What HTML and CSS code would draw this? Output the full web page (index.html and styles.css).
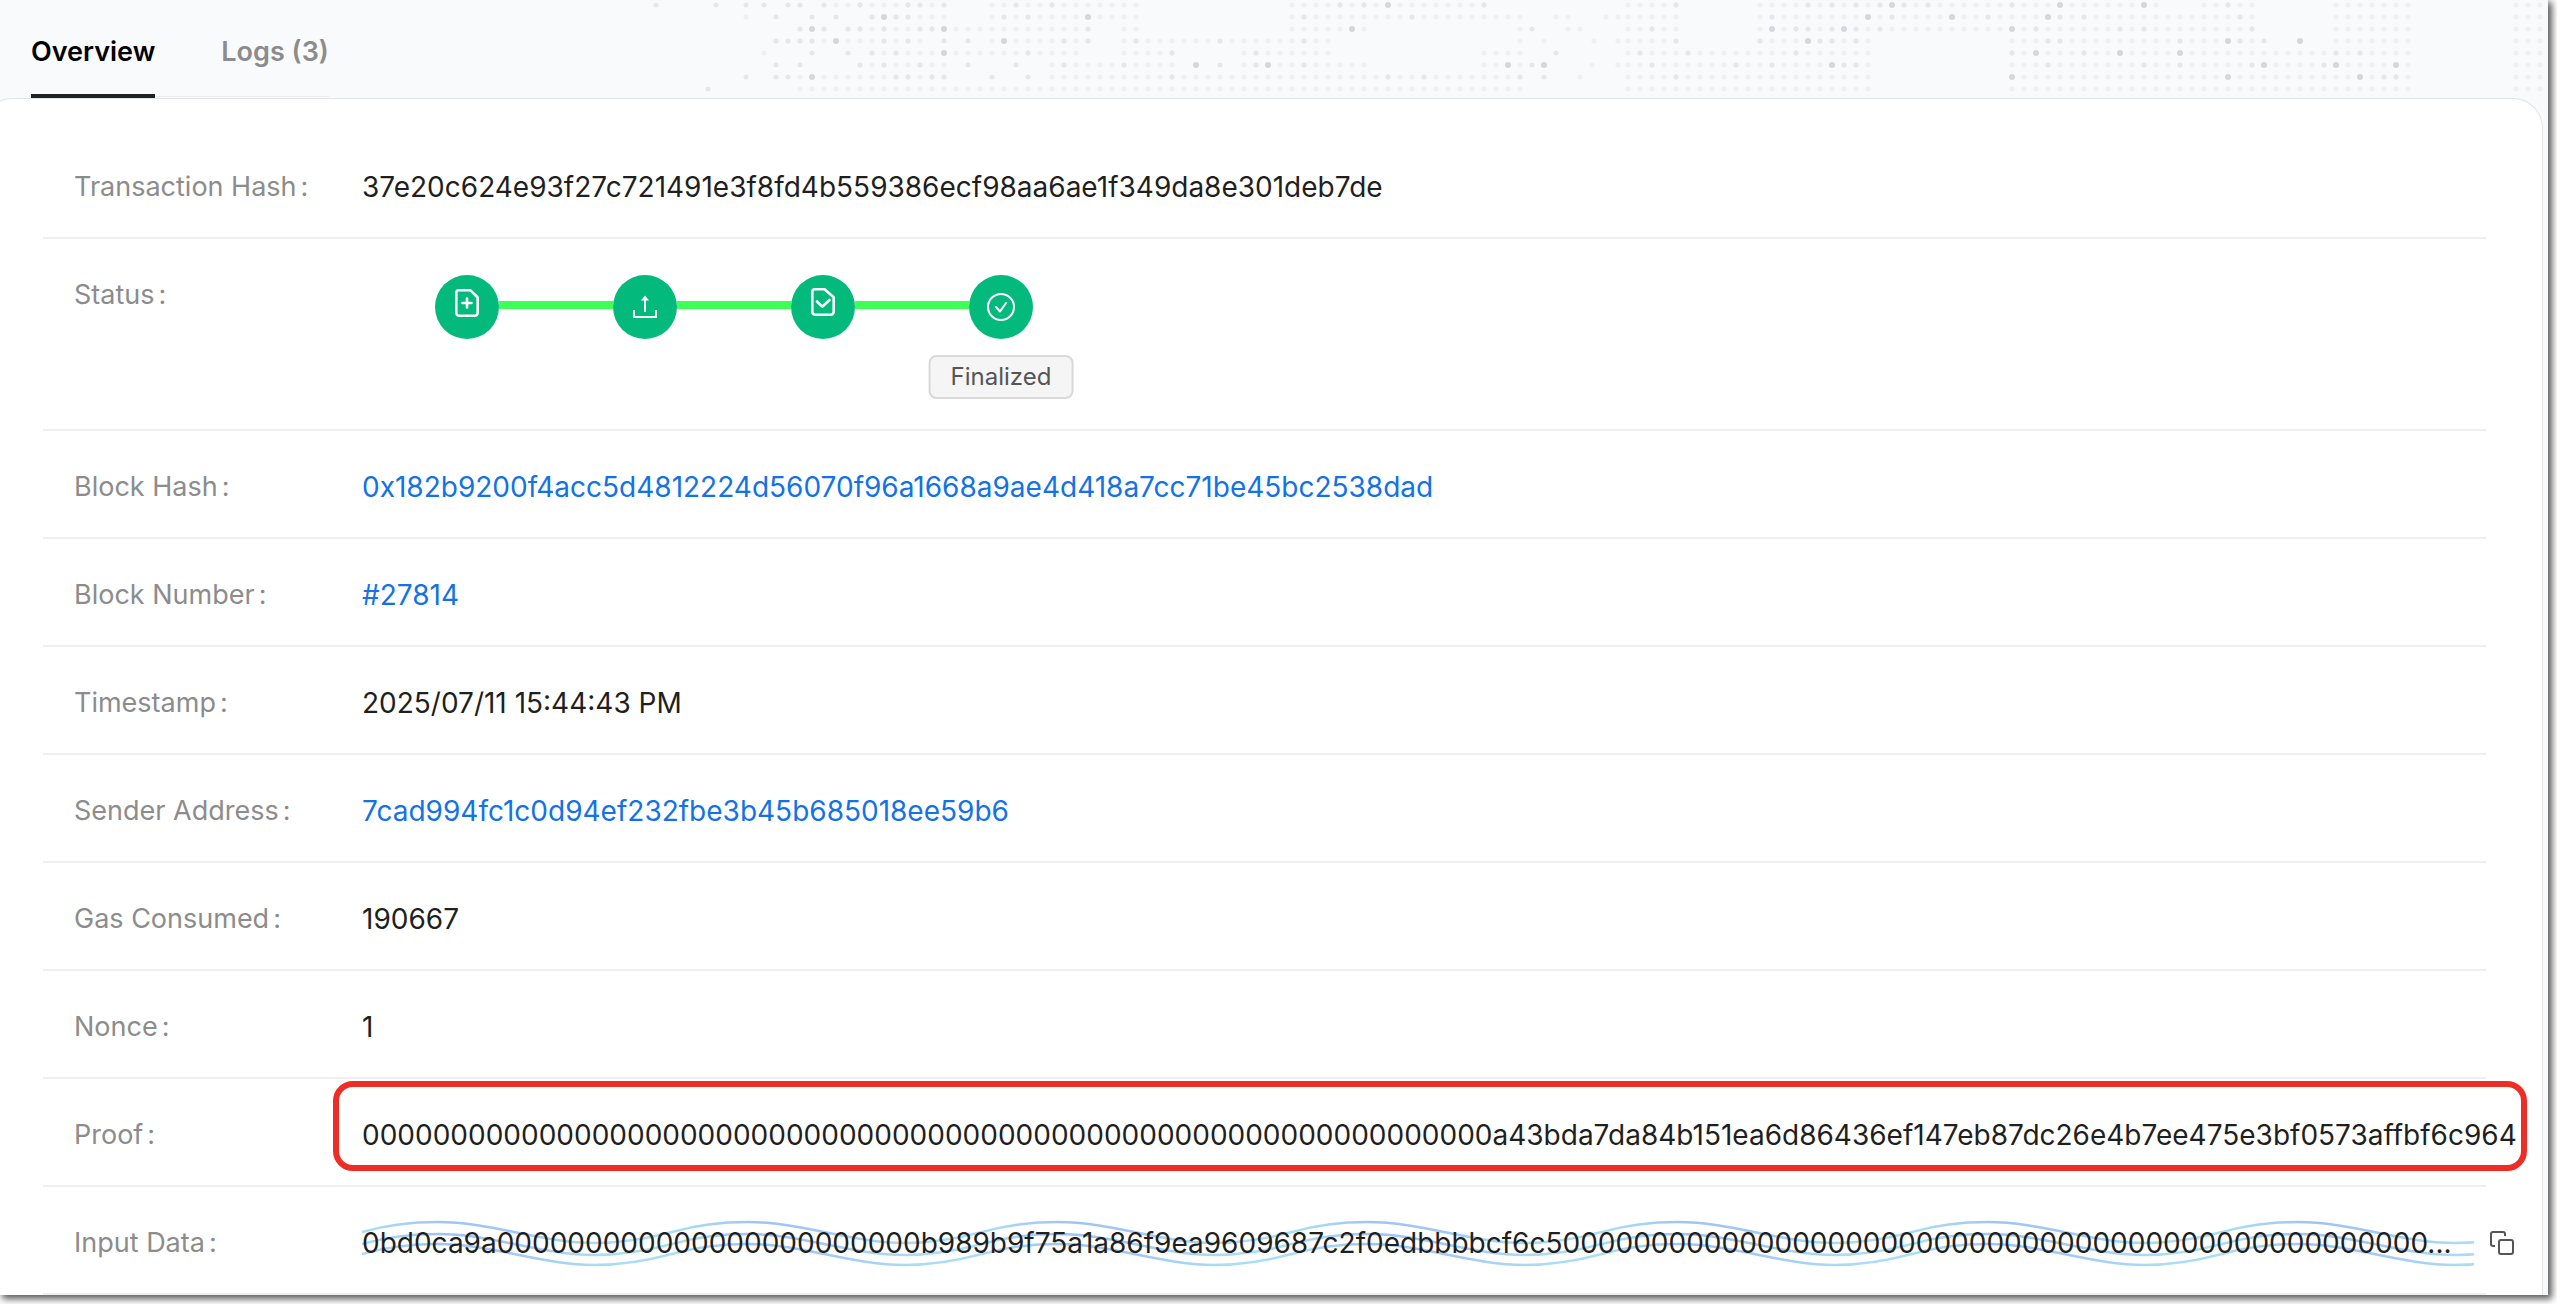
FILE: index.html
```html
<!DOCTYPE html>
<html lang="en">
<head>
<meta charset="utf-8">
<title>Transaction details</title>
<link rel="stylesheet" href="styles.css">
</head>
<body>
<main class="frame">
  <header class="topbar">
    <svg class="dots" width="2548" height="98" fill="none" stroke-linecap="round" stroke-width="5" aria-hidden="true">
      <path class="dots-light" d="M824 5H945M992 5H1137M1292 5H1485M1628 5H1677M1760 5H2157M2204 5H2253M2336 5H2409M2516 5H2541
        M746 17h1M872 17H945M992 17H1137M1292 17H1521M1556 17H1569M1606 17H1619M1628 17H1677M1760 17H2253M2336 17H2409M2516 17H2541
        M800 29H825M848 29H1089M1124 29H1137M1292 29H1365M1520 29h1M1568 29H1581M1628 29H1677M1760 29H2253M2336 29H2409M2516 29H2541
        M776 41H921M992 41H1089M1124 41H1329M1520 41h1M1544 41h1M1594 41h1M1618 41h1M1628 41H1677M1760 41H1869M2012 41H2253M2336 41H2409M2516 41H2541
        M764 53h1M872 53H1077M1124 53H1173M1244 53H1329M1484 53H1521M1628 53H1869M2012 53H2409M2516 53H2541
        M860 65H945M1052 65H1173M1244 65H1365M1484 65H1521M1592 65h1M1618 65h1M1628 65H1869M2012 65H2409M2516 65H2541
        M800 77H945M1052 77H1521M1580 77h1M1628 77H1869M2012 77H2409M2516 77H2541
        M800 89H1521M1628 89H1869M2012 89H2409M2516 89H2541"/>
      <path class="dots-medium" d="M656 5h0M716 5h0M746 5h0M764 5h0M788 5h0M800 5h0M824 5h0M860 5h0M908 5h0M920 5h0M944 5h0M1016 5h0M1052 5h0M1340 5h0M1364 5h0M1484 5h0M1676 5h0M1808 5h0M1832 5h0M1856 5h0M1880 5h0M1904 5h0M1928 5h0M2012 5h0M2228 5h0
        M776 17h0M812 17h0M836 17h0M872 17h0M896 17h0M908 17h0M1004 17h0M1028 17h0M1304 17h0M1412 17h0M1772 17h0M1892 17h0M1988 17h0M2060 17h0M2084 17h0M2240 17h0
        M800 29h0M824 29h0M848 29h0M860 29h0M884 29h0M920 29h0M932 29h0M1088 29h0M1532 29h0M1652 29h0M1796 29h0M1808 29h0M1832 29h0M1856 29h0M1880 29h0M2036 29h0M2120 29h0M2144 29h0M2252 29h0
        M776 41h0M788 41h0M800 41h0M812 41h0M884 41h0M908 41h0M944 41h0M968 41h0M1064 41h0M1088 41h0M1136 41h0M1220 41h0M1304 41h0M1676 41h0M1760 41h0M1820 41h0M1832 41h0M1856 41h0M2048 41h0M2060 41h0M2180 41h0M2240 41h0M2264 41h0
        M812 53h0M848 53h0M872 53h0M896 53h0M1028 53h0M1172 53h0M1256 53h0M1556 53h0M1640 53h0M1688 53h0M1796 53h0M2012 53h0M2084 53h0M2336 53h0M2360 53h0
        M776 65h0M800 65h0M860 65h0M884 65h0M920 65h0M968 65h0M1016 65h0M1064 65h0M1124 65h0M1220 65h0M1256 65h0M1304 65h0M1532 65h0M1652 65h0M1736 65h0M1772 65h0M1844 65h0M1856 65h0M2048 65h0M2144 65h0M2180 65h0M2252 65h0M2324 65h0
        M746 77h0M776 77h0M788 77h0M896 77h0M908 77h0M932 77h0M944 77h0M992 77h0M1028 77h0M1172 77h0M1388 77h0M1424 77h0M1520 77h0M1544 77h0M1676 77h0M2384 77h0M2396 77h0
        M708 89h0"/>
      <path class="dots-dark" d="M1388 5h0M1892 5h0M2060 5h0M2144 5h0M884 17h0M1088 17h0M1868 17h0M1952 17h0M2048 17h0
        M812 29h0M944 29h0M1352 29h0M1772 29h0M1844 29h0M2012 29h0M836 41h0M1004 41h0M1808 41h0M2228 41h0M2300 41h0
        M944 53h0M2036 53h0M2120 53h0M2180 53h0M1196 65h0M1268 65h0M1508 65h0M1544 65h0M1832 65h0M2264 65h0M2336 65h0M2396 65h0
        M812 77h0M2012 77h0M2228 77h0M2360 77h0"/>
    </svg>
    <nav class="tabs">
      <button class="tab tab-active" type="button">Overview</button>
      <button class="tab" type="button">Logs (3)</button>
    </nav>
  </header>

  <section class="card">
    <dl class="details">
      <div class="row">
        <dt>Transaction Hash<span class="colon">:</span></dt>
        <dd>37e20c624e93f27c721491e3f8fd4b559386ecf98aa6ae1f349da8e301deb7de</dd>
      </div>
      <div class="row row-status">
        <dt>Status<span class="colon">:</span></dt>
        <dd class="steps">
          <span class="step">
            <svg width="64" height="64" viewBox="0 0 64 64" fill="none" stroke="#fff" stroke-width="2.6" stroke-linecap="round" stroke-linejoin="round" aria-hidden="true">
              <path d="M24 15.3h11.5l7.2 7.2v15.2a3 3 0 0 1-3 3H24.3a3 3 0 0 1-3-3V18a2.7 2.7 0 0 1 2.7-2.7z"/>
              <path d="M32 23.5v9M27.500 28h9"/>
            </svg>
          </span>
          <span class="link"></span>
          <span class="step">
            <svg width="64" height="64" viewBox="0 0 64 64" fill="none" stroke="#fff" stroke-width="2" aria-hidden="true">
              <path d="M21 35v7h22v-7M32 37V24"/>
              <path d="M32 20.5l4 5h-8z" fill="#fff" stroke="none"/>
            </svg>
          </span>
          <span class="link"></span>
          <span class="step">
            <svg width="64" height="64" viewBox="0 0 64 64" fill="none" stroke="#fff" stroke-width="2.6" stroke-linecap="round" stroke-linejoin="round" aria-hidden="true">
              <path d="M24 14.3h9.5l9.2 8v14.4a3 3 0 0 1-3 3H24.3a3 3 0 0 1-3-3V17a2.7 2.7 0 0 1 2.7-2.7z"/>
              <path d="M26 26.5l5.2 5.2 7.3-6.7"/>
            </svg>
          </span>
          <span class="link"></span>
          <span class="step">
            <svg width="64" height="64" viewBox="0 0 64 64" fill="none" stroke="#fff" stroke-width="2" stroke-linecap="round" stroke-linejoin="round" aria-hidden="true">
              <circle cx="32" cy="32" r="13"/>
              <path d="M27 32l4 4.5 6-8.5"/>
            </svg>
            <span class="tag">Finalized</span>
          </span>
        </dd>
      </div>
      <div class="row">
        <dt>Block Hash<span class="colon">:</span></dt>
        <dd><a href="#block">0x182b9200f4acc5d4812224d56070f96a1668a9ae4d418a7cc71be45bc2538dad</a></dd>
      </div>
      <div class="row">
        <dt>Block Number<span class="colon">:</span></dt>
        <dd><a href="#number">#27814</a></dd>
      </div>
      <div class="row">
        <dt>Timestamp<span class="colon">:</span></dt>
        <dd>2025/07/11 15:44:43 PM</dd>
      </div>
      <div class="row">
        <dt>Sender Address<span class="colon">:</span></dt>
        <dd><a href="#sender">7cad994fc1c0d94ef232fbe3b45b685018ee59b6</a></dd>
      </div>
      <div class="row">
        <dt>Gas Consumed<span class="colon">:</span></dt>
        <dd>190667</dd>
      </div>
      <div class="row">
        <dt>Nonce<span class="colon">:</span></dt>
        <dd>1</dd>
      </div>
      <div class="row row-marked">
        <dt>Proof<span class="colon">:</span></dt>
        <dd>0000000000000000000000000000000000000000000000000000000000000000a43bda7da84b151ea6d86436ef147eb87dc26e4b7ee475e3bf0573affbf6c964</dd>
      </div>
      <div class="row">
        <dt>Input Data<span class="colon">:</span></dt>
        <dd class="input-data">
          <div class="wave-box">
            <svg class="wave" width="100%" height="48" aria-hidden="true">
              <defs>
                <linearGradient id="tide" gradientUnits="userSpaceOnUse" x1="0" x2="310" y1="0" y2="0">
                  <stop offset="0" stop-color="#a9def5"/>
                  <stop offset=".27" stop-color="#a0c4f6"/>
                  <stop offset=".45" stop-color="#a2c6f6"/>
                  <stop offset=".78" stop-color="#a9dcf5"/>
                  <stop offset="1" stop-color="#a9def5"/>
                </linearGradient>
                <pattern id="swell" width="310" height="48" patternUnits="userSpaceOnUse">
                  <g fill="none" stroke="url(#tide)" stroke-width="2.5">
                    <path d="M-1 13.5L0 13C28 5 51 3 76 3C129 3 180 24 233 24C260 24 284 20 310 13L311 12.5"/>
                    <path d="M-1 25.5L0 25C28 17 51 15 76 15C129 15 180 36 233 36C260 36 284 32 310 25L311 24.5"/>
                    <path d="M-1 35.5L0 35C28 27 51 25 76 25C129 25 180 46 233 46C260 46 284 42 310 35L311 34.5"/>
                  </g>
                </pattern>
              </defs>
              <rect width="100%" height="48" fill="url(#swell)"/>
            </svg>
            <span class="wave-text">0bd0ca9a000000000000000000000000b989b9f75a1a86f9ea9609687c2f0edbbbbcf6c50000000000000000000000000000000000000000000000000...</span>
          </div>
          <button class="copy" type="button" aria-label="Copy input data">
            <svg width="24" height="24" viewBox="0 0 24 24" fill="none" stroke="#555" stroke-width="2" stroke-linejoin="round" aria-hidden="true">
              <rect x="9" y="9" width="14" height="14" rx="2"/>
              <path d="M5 15H3a2 2 0 0 1-2-2V3a2 2 0 0 1 2-2h10a2 2 0 0 1 2 2v2"/>
            </svg>
          </button>
        </dd>
      </div>
    </dl>
  </section>
</main>
</body>
</html>
```
FILE: styles.css
```css
* {
  box-sizing: border-box;
}

body {
  margin: 0;
  background: #fff;
  color: #1f1f1f;
  font-family: Inter, "Liberation Sans", sans-serif;
  font-size: 28px;
  line-height: 44px;
}

.frame {
  margin: 0 9px 9px 0;
  overflow: hidden;
  background: #f9fafc;
  box-shadow: 3px 3px 7px 1px rgba(0, 0, 0, 0.65);
}

.topbar {
  position: relative;
  display: flex;
  padding-left: 31px;
  overflow: hidden;
}

.dots {
  position: absolute;
  top: 0;
  left: 0;
}

.dots-light {
  stroke: #eef0f2;
  stroke-dasharray: 0 12;
}

.dots-medium {
  stroke: #e5e8ea;
}

.dots-dark {
  stroke: #d3d8dc;
  stroke-width: 6;
}

.tabs {
  position: relative;
  display: flex;
  gap: 66px;
  height: 98px;
  background: linear-gradient(#ececee, #ececee) 0 96px / 100% 1px no-repeat;
}

.tab {
  padding: 30px 0 20px;
  border: 0;
  border-bottom: 4px solid transparent;
  background: none;
  color: #8c8c8c;
  font: inherit;
  font-size: 27px;
  font-weight: 600;
}

.tab-active {
  border-bottom-color: #1f2223;
  color: #000;
}

.card {
  margin: 0 5px 0 -18px;
  padding: 32px 56px 0 60px;
  border: 1px solid #e2e3e5;
  border-bottom: 0;
  border-radius: 30px 30px 0 0;
  background: #fff;
}

.details {
  margin: 0;
}

.row {
  position: relative;
  display: flex;
  padding: 34px 0 28px 31px;
  border-bottom: 2px solid #efefef;
}

.row dt {
  flex: 0 0 288px;
  color: #8c8c8c;
  font-size: 27px;
}

.row dd {
  flex: 1;
  min-width: 0;
  height: 44px;
  margin: 0;
  white-space: nowrap;
}

.row a {
  color: #1272e6;
  text-decoration: none;
}

.colon {
  margin-left: 4px;
}

.row .steps {
  display: flex;
  align-items: flex-start;
  height: 126px;
  padding: 2px 0 0 73px;
}

.row-status {
  padding-bottom: 30px;
}

.step {
  position: relative;
  width: 64px;
  height: 64px;
  border-radius: 50%;
  background: #03ba7c;
}

.step svg {
  display: block;
}

.link {
  width: 114px;
  height: 8px;
  margin-top: 26px;
  background: #3dff55;
}

.tag {
  position: absolute;
  top: 80px;
  left: 50%;
  transform: translateX(-50%);
  padding: 4px 20px;
  border: 2px solid #d9d9d9;
  border-radius: 8px;
  background: #f5f5f5;
  color: #555;
  font-size: 24px;
  line-height: 32px;
}

.row-marked::after {
  content: "";
  position: absolute;
  top: 2px;
  right: -41px;
  bottom: 14px;
  left: 290px;
  border: 6px solid #ee2d26;
  border-radius: 20px;
}

.row .input-data {
  display: flex;
  align-items: center;
  gap: 16px;
  margin-right: -28px;
}

.wave-box {
  position: relative;
  flex: 1;
  min-width: 0;
}

.wave {
  position: absolute;
  top: -2px;
  left: 0;
}

.wave-text {
  position: relative;
}

.copy {
  display: block;
  padding: 0;
  border: 0;
  background: none;
  line-height: 0;
}
```
